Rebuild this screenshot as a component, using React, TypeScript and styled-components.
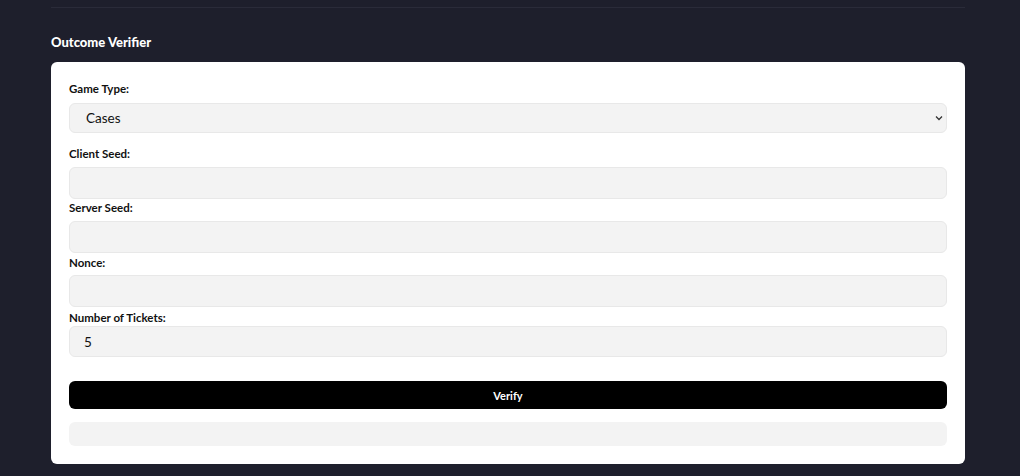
import * as React from 'react'
import styled, { createGlobalStyle } from 'styled-components'

const GlobalStyle = createGlobalStyle`
  html, body {
    margin: 0;
    padding: 0;
    background: #1e1f2c;
  }
  body {
    font-family: Lato, "Open Sans", "Liberation Sans", sans-serif;
  }
`

const Page = styled.div`
  min-height: 476px;
  padding: 7px 55px 12px 51px;
  box-sizing: border-box;
`

const Divider = styled.div`
  height: 1px;
  background: #2a2b39;
`

const Title = styled.h2`
  margin: 26px 0 0;
  font-size: 13px;
  line-height: 16px;
  font-weight: 900;
  color: #ffffff;
`

const Card = styled.div`
  margin-top: 12px;
  background: #ffffff;
  border-radius: 6px;
  padding: 18px;
  display: flex;
  flex-direction: column;
`

const Label = styled.label<{ $top: number; $gap: number }>`
  display: block;
  margin: ${p => p.$top}px 0 ${p => p.$gap}px;
  font-size: 11.5px;
  line-height: 14px;
  font-weight: 700;
  color: #111111;
`

const SelectWrap = styled.div`
  position: relative;
`

const Select = styled.select`
  appearance: none;
  width: 100%;
  height: 30px;
  box-sizing: border-box;
  padding: 0 16px;
  background: #f3f3f3;
  border: 1px solid #e8e8e8;
  border-radius: 6px;
  font-family: inherit;
  font-size: 13.5px;
  color: #111111;
  outline: none;
`

const Chevron = styled.svg`
  position: absolute;
  right: 4px;
  top: 11px;
  width: 8px;
  height: 8px;
  pointer-events: none;
`

const Input = styled.input<{ $h?: number }>`
  display: block;
  width: 100%;
  height: ${p => p.$h || 32}px;
  box-sizing: border-box;
  padding: 0 14px;
  background: #f3f3f3;
  border: 1px solid #e8e8e8;
  border-radius: 6px;
  font-family: inherit;
  font-size: 13.5px;
  color: #111111;
  outline: none;
`

const Button = styled.button`
  margin-top: 24px;
  height: 28px;
  width: 100%;
  border: none;
  border-radius: 6px;
  background: #000000;
  color: #ffffff;
  font-family: inherit;
  font-size: 11px;
  font-weight: 700;
  cursor: pointer;
`

const Output = styled.div`
  margin-top: 13px;
  height: 24px;
  border-radius: 6px;
  background: #f3f3f3;
`

type FieldProps = { label: string; top: number; gap: number; value?: string; h?: number }

const Field = (props: FieldProps) => (
  <div>
    <Label $top={props.top} $gap={props.gap}>{props.label}</Label>
    <Input $h={props.h} defaultValue={props.value} />
  </div>
)

export default function App() {
  return (
    <>
      <GlobalStyle />
      <Page>
        <Divider />
        <Title>Outcome Verifier</Title>
        <Card>
          <Label $top={2} $gap={7}>Game Type:</Label>
          <SelectWrap>
            <Select defaultValue="cases">
              <option value="cases">Cases</option>
            </Select>
            <Chevron viewBox="0 0 8 8">
              <path d="M1 2.5 L4 5.5 L7 2.5" fill="none" stroke="#333" strokeWidth="1.3" />
            </Chevron>
          </SelectWrap>
          <Field label="Client Seed:" top={14} gap={6} />
          <Field label="Server Seed:" top={2} gap={6} />
          <Field label="Nonce:" top={3} gap={5} />
          <Field label="Number of Tickets:" top={4} gap={1} value="5" h={31} />
          <Button>Verify</Button>
          <Output />
        </Card>
      </Page>
    </>
  )
}
